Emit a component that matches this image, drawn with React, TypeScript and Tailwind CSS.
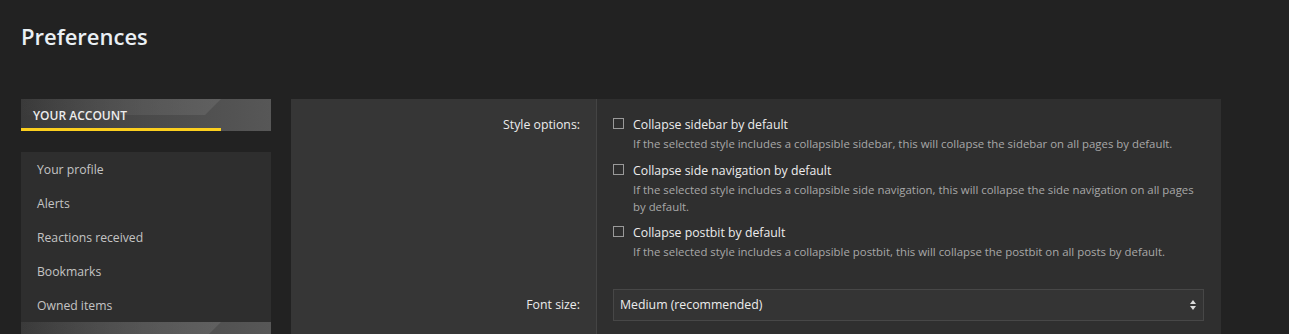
import React from 'react'

const font = { fontFamily: '"Open Sans", "Noto Sans", sans-serif' }

const menuItems = ['Your profile', 'Alerts', 'Reactions received', 'Bookmarks', 'Owned items']

const styleOptions = [
  {
    label: 'Collapse sidebar by default',
    hint: 'If the selected style includes a collapsible sidebar, this will collapse the sidebar on all pages by default.'
  },
  {
    label: 'Collapse side navigation by default',
    hint: 'If the selected style includes a collapsible side navigation, this will collapse the side navigation on all pages by default.'
  },
  {
    label: 'Collapse postbit by default',
    hint: 'If the selected style includes a collapsible postbit, this will collapse the postbit on all posts by default.'
  }
]

function BlockHeader({ title }: { title?: string }) {
  return (
    <div className="relative h-[32px] overflow-hidden bg-gradient-to-r from-[#3a3a3a] via-[#4a4a4a] to-[#575757]">
      {/* diagonal light band */}
      <div className="absolute left-0 top-0 h-[16px] w-[200px] bg-gradient-to-r from-transparent to-[#6a6a6a] opacity-60 [clip-path:polygon(0_0,100%_0,92%_100%,0_100%)]" />
      {title && (
        <>
          <div className="relative pl-[12px] pt-[8px] text-[12px] font-semibold leading-[17px] text-[#ececec]">
            {title}
          </div>
          <div className="absolute bottom-0 left-0 h-[3px] w-[200px] bg-[#fccf1e]" />
        </>
      )}
    </div>
  )
}

function Checkbox({ label, hint }: { label: string; hint: string }) {
  return (
    <div className="flex items-start">
      <span className="mt-[2px] mr-[9px] box-border h-[11px] w-[11px] shrink-0 border border-[#9a9a9a] bg-transparent" />
      <div>
        <div className="text-[12.3px] leading-[18px] text-[#ececec]">{label}</div>
        <div className="mt-[1px] text-[11.4px] leading-[17px] text-[#a8a8a8]">{hint}</div>
      </div>
    </div>
  )
}

export default function App() {
  return (
    <div className="h-[334px] overflow-hidden bg-[#222222] pl-[21px] pt-[20px]" style={font}>
      <h1 className="text-[22px] font-semibold leading-[32px] text-[#eaf0f5]">Preferences</h1>

      <div className="mt-[47px] flex gap-[20px]">
        {/* sidebar */}
        <div className="w-[250px] shrink-0">
          <BlockHeader title="YOUR ACCOUNT" />
          <div className="mt-[21px] bg-[#2e2e2e]">
            {menuItems.map((item) => (
              <div key={item} className="flex h-[34px] items-center pl-[16px] pt-[2px] text-[12.2px] text-[#c4c4c4]">
                {item}
              </div>
            ))}
          </div>
          <BlockHeader />
        </div>

        {/* main form */}
        <div className="w-[930px] shrink-0 bg-[#2f2f2f]">
          <div className="flex">
            <div className="w-[306px] shrink-0 border-r border-[#444444] bg-[#363636] pr-[16px] pt-[17px] text-right text-[12.3px] leading-[18px] text-[#ececec]">
              Style options:
            </div>
            <div className="flex flex-1 flex-col gap-[9.5px] pl-[16px] pr-[16px] pt-[17px] pb-[14px]">
              {styleOptions.map((o) => (
                <Checkbox key={o.label} label={o.label} hint={o.hint} />
              ))}
            </div>
          </div>
          <div className="flex">
            <div className="flex w-[306px] shrink-0 items-center justify-end border-r border-[#444444] bg-[#363636] pr-[16px] pt-[15px] pb-[14px] text-[12.3px] leading-[18px] text-[#ececec]">
              Font size:
            </div>
            <div className="flex-1 px-[16px] pt-[15px] pb-[14px]">
              <div className="relative flex h-[32px] w-[591px] items-center border border-[#474747] bg-[#343434] pl-[6px] text-[12.3px] text-[#ececec]">
                Medium (recommended)
                <svg className="absolute right-[7px] top-1/2 -translate-y-1/2" width="6" height="10" viewBox="0 0 6 10">
                  <path d="M3 0L6 4H0z" fill="#dcdcdc" />
                  <path d="M3 10L6 6H0z" fill="#dcdcdc" />
                </svg>
              </div>
            </div>
          </div>
        </div>
      </div>
    </div>
  )
}
